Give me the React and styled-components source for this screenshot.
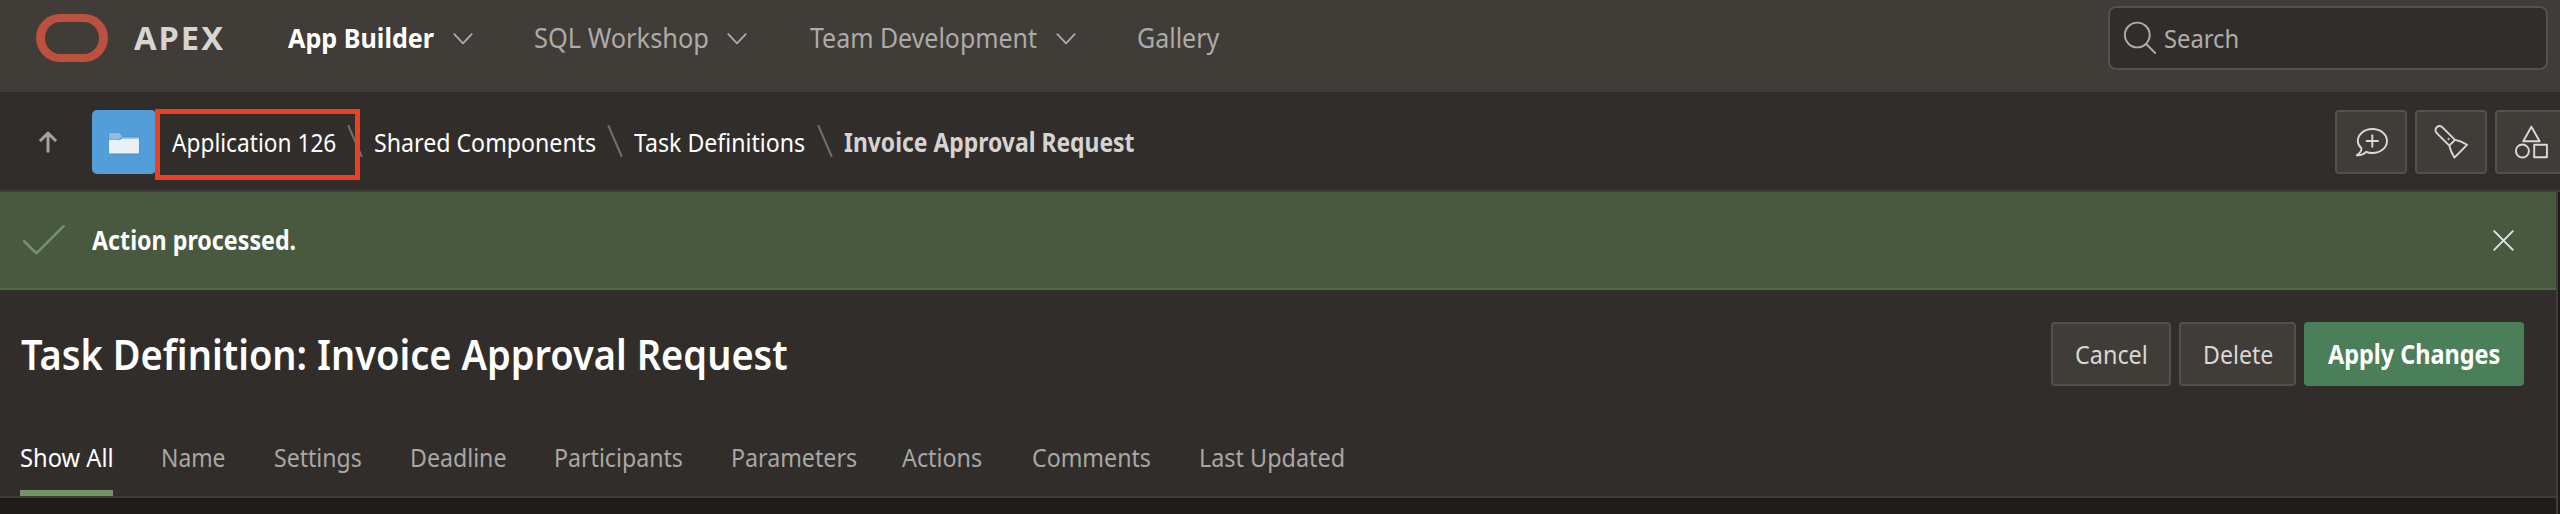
import React from 'react';
import styled, { createGlobalStyle } from 'styled-components';

const GlobalStyle = createGlobalStyle`
  * { box-sizing: border-box; }
  body { margin: 0; background: #312d2a; overflow: hidden; }
`;

const Page = styled.div`
  position: relative;
  width: 2560px;
  height: 514px;
  display: flex;
  flex-direction: column;
  overflow: hidden;
  background: #312d2a;
  font-family: "Noto Sans", "Open Sans", sans-serif;
  font-size: 26px;
  color: #fff;
`;

/* A single line of slightly condensed text that occupies $w pixels. */
const Label = styled.span`
  display: block;
  flex: none;
  width: ${(p) => p.$w}px;
  white-space: nowrap;
  line-height: 36px;
  transform: scaleX(${(p) => p.$k || 0.89});
  transform-origin: 0 50%;
`;

const Header = styled.header`
  height: 92px;
  flex: none;
  display: flex;
  padding: 6px 12px 22px 36px;
  align-items: center;
  background: #403c38;
`;

const Logo = styled.div`
  width: 72px;
  height: 48px;
  border: 8px solid #bb513e;
  border-width: 8px 9px;
  border-radius: 24px;
`;

const Brand = styled.div`
  width: 180px;
  padding-left: 26px;
  font-size: 33px;
  font-weight: 700;
  letter-spacing: 2px;
  color: #d6d5d4;
`;

const Nav = styled.nav`
  display: flex;
  flex: 1;
  font-size: 27px;
`;

const NavItem = styled.div`
  display: flex;
  align-items: center;
  margin-right: ${(p) => p.$gap}px;
  color: ${(p) => (p.$active ? '#fff' : '#adaba9')};
  font-weight: ${(p) => (p.$active ? 700 : 400)};
  svg { margin-left: 19px; margin-top: 2px; }
`;

const SearchBox = styled.div`
  display: flex;
  align-items: center;
  width: 440px;
  height: 64px;
  padding-left: 13px;
  border: 2px solid #55514d;
  border-radius: 8px;
  background: #312d2a;
  color: #b0aeab;
  svg { margin-right: 7px; }
`;

const CrumbBar = styled.div`
  height: 100px;
  flex: none;
  display: flex;
  align-items: center;
  padding: 2px 0 0 39px;
  border-bottom: 2px solid #403c39;
`;

const AppTile = styled.div`
  width: 64px;
  height: 64px;
  margin: 0 16px 0 35px;
  padding: 19px 0 0 16px;
  border-radius: 5px;
  background: #539dd8;
`;

const Crumbs = styled.div`
  display: flex;
  align-items: center;
  flex: 1;
`;

const Crumb = styled(Label)`
  color: ${(p) => (p.$current ? '#d6d4d2' : '#fff')};
  font-weight: ${(p) => (p.$current ? 700 : 400)};
`;

const IconButtons = styled.div`
  display: flex;
  gap: 8px;
  width: 225px;
  overflow: hidden;
`;

const IconButton = styled.button`
  flex: none;
  width: 72px;
  height: 64px;
  padding: 0;
  border: 2px solid #54504c;
  border-radius: 4px;
  background: #403c38;
  svg { display: block; }
`;

const Body = styled.main`
  flex: 1;
  display: flex;
  background: #1f1d1b;
`;

const Content = styled.section`
  width: 2558px;
  border-right: 2px solid #403d39;
`;

const Alert = styled.div`
  display: flex;
  align-items: center;
  height: 98px;
  padding: 0 42px 0 22px;
  border-bottom: 2px solid #55684c;
  background: #485940;
  font-weight: 700;
`;

const AlertText = styled.div`
  flex: 1;
  padding-left: 26px;
`;

const TitleRow = styled.div`
  display: flex;
  align-items: center;
  justify-content: space-between;
  height: 128px;
  padding: 0 32px 0 21px;
  background: #312d2a;
`;

const Title = styled.h1`
  margin: 0;
  font-size: 41px;
  font-weight: 600;
`;

const Actions = styled.div`
  display: flex;
  gap: 8px;
`;

const Button = styled.button`
  display: flex;
  align-items: center;
  width: ${(p) => p.$width}px;
  height: 64px;
  padding: 0 0 1px 22px;
  border: 2px solid ${(p) => (p.$hot ? '#4a7f59' : '#54504c')};
  border-radius: 4px;
  background: ${(p) => (p.$hot ? '#4a7f59' : '#403c38')};
  color: ${(p) => (p.$hot ? '#fff' : '#d9d7d4')};
  font: inherit;
  font-weight: ${(p) => (p.$hot ? 700 : 400)};
`;

const Tabs = styled.div`
  display: flex;
  gap: 48px;
  height: 80px;
  padding-left: 20px;
  border-bottom: 2px solid #3f3d39;
  background: #312d2a;
`;

const Tab = styled.div`
  display: flex;
  align-items: center;
  padding-top: 5px;
  border-bottom: 6px solid ${(p) => (p.$active ? '#759368' : 'transparent')};
  color: ${(p) => (p.$active ? '#fff' : '#a9a7a4')};
`;

const Highlight = styled.div`
  position: absolute;
  left: 155px;
  top: 109px;
  width: 205px;
  height: 71px;
  border: 5px solid #ea4025;
`;

const Chevron = () => (
  <svg width="20" height="12" viewBox="0 0 20 12" fill="none" stroke="#adaba9" strokeWidth="1.8" strokeLinecap="round" strokeLinejoin="round">
    <path d="M1.3 1.2 10 10.4 18.7 1.2" />
  </svg>
);

const SlashSvg = styled.svg`
  flex: none;
  margin: 0 11px 2px 12px;
`;
const Slash = () => (
  <SlashSvg width="16" height="32" viewBox="0 0 16 32" stroke="#716e6b" strokeWidth="2" strokeLinecap="round">
    <path d="M1.5 1 14.5 31" />
  </SlashSvg>
);

const NAV = [
  { text: 'App Builder', w: 146, k: 0.932, gap: 61, menu: true, active: true },
  { text: 'SQL Workshop', w: 174, k: 0.94, gap: 63, menu: true },
  { text: 'Team Development', w: 227, k: 0.923, gap: 61, menu: true },
  { text: 'Gallery', w: 82, k: 0.925, gap: 0 },
];

const CRUMBS = [
  { text: 'Application 126', w: 163, k: 0.8725 },
  { text: 'Shared Components', w: 221, k: 0.891 },
  { text: 'Task Definitions', w: 170.5, k: 0.889 },
  { text: 'Invoice Approval Request', w: 291, k: 0.8805, current: true },
];

const TABS = [
  { text: 'Show All', w: 93, k: 0.912 },
  { text: 'Name', w: 65, k: 0.88 },
  { text: 'Settings', w: 88, k: 0.888 },
  { text: 'Deadline', w: 95.5, k: 0.89 },
  { text: 'Participants', w: 129, k: 0.89 },
  { text: 'Parameters', w: 123.5, k: 0.892 },
  { text: 'Actions', w: 82, k: 0.896 },
  { text: 'Comments', w: 118.5, k: 0.892 },
  { text: 'Last Updated', w: 146, k: 0.899 },
];

const glyph = {
  width: 68,
  height: 60,
  viewBox: '2 2 68 60',
  fill: 'none',
  stroke: '#dcdad6',
  strokeWidth: 1.9,
  strokeLinejoin: 'round',
  strokeLinecap: 'round',
};

export default function App() {
  return (
    <Page>
      <GlobalStyle />
      <Header>
        <Logo />
        <Brand><Label $w={90} $k={0.99}>APEX</Label></Brand>
        <Nav>
          {NAV.map((n) => (
            <NavItem key={n.text} $active={n.active} $gap={n.gap}>
              <Label $w={n.w} $k={n.k}>{n.text}</Label>
              {n.menu && <Chevron />}
            </NavItem>
          ))}
        </Nav>
        <SearchBox>
          <svg width="34" height="34" viewBox="0 0 34 34" fill="none" stroke="#b0aeab" strokeWidth="1.9" strokeLinecap="round">
            <circle cx="14.3" cy="14" r="12.4" />
            <path d="m23.2 23 9 9" />
          </svg>
          <Label $w={73} $k={0.913}>Search</Label>
        </SearchBox>
      </Header>

      <CrumbBar>
        <svg width="18" height="22" viewBox="0 0 18 22" fill="none" stroke="#a5a3a0" strokeWidth="3" strokeLinecap="round" strokeLinejoin="round">
          <path d="M9 20.2V2M1.8 9.2 9 2l7.2 7.2" />
        </svg>
        <AppTile>
          <svg width="32" height="26" viewBox="0 0 32 26">
            <path d="M.8 1.3h11l3 4h16.5v18.2H.8z" fill="#4289bd" />
            <path d="M1.2 1.8h10.3l3.2 3.7-4 3.2H1.2z" fill="#8ebde4" />
            <path d="M14.7 5.7h16.1v1.7H13z" fill="#7db2db" />
            <path d="M1 9.1h10.5L14.3 7.4H31v15.2H1z" fill="#eaf1f6" />
          </svg>
        </AppTile>
        <Crumbs>
          {CRUMBS.map((c, i) => (
            <React.Fragment key={c.text}>
              {i > 0 && <Slash />}
              <Crumb $w={c.w} $k={c.k} $current={c.current}>{c.text}</Crumb>
            </React.Fragment>
          ))}
        </Crumbs>
        <IconButtons>
          <IconButton aria-label="Feedback">
            <svg {...glyph}>
              <path d="M26.400 38.300C23.800 36 22.800 33.600 22.800 31c0-6.800 6.500-12 14.600-12s14.600 5.200 14.600 12-6.500 12-14.600 12c-2.400 0-4.500-.4-6.300-1.200-2.300 2.500-5.500 3.600-9.300 3.400 3.200-2 4.900-4.300 4.600-6.900zM37.300 25.300v11.400M31.600 31H43" />
            </svg>
          </IconButton>
          <IconButton aria-label="Search application">
            <svg {...glyph}>
              <path d="M40 29.900 28 17.800c-4.300-4.200-10.200 1-6.200 5.300l12.500 12.600zM40 29.900c3.500.6 8 2.300 12 4.900L39.400 47.600c-2.400-3.800-4.100-7.700-5.100-11.900" />
              <circle cx="33.4" cy="29" r=".6" fill="#dcdad6" strokeWidth="1" />
            </svg>
          </IconButton>
          <IconButton aria-label="Shared components">
            <svg {...glyph}>
              <path d="m36.400 16.800 8.200 14.400H28.200z" />
              <circle cx="27.400" cy="41" r="6.500" />
              <path d="M39.200 34.800h12.700v12.500H39.200z" />
            </svg>
          </IconButton>
        </IconButtons>
      </CrumbBar>

      <Body>
        <Content>
          <Alert>
            <svg width="44" height="32" viewBox="0 0 44 32" fill="none" stroke="#72926a" strokeWidth="2.6" strokeLinecap="round" strokeLinejoin="round">
              <path d="M2 17.300 14.400 29.300 41.600 2.200" />
            </svg>
            <AlertText><Label $w={203} $k={0.8935}>Action processed.</Label></AlertText>
            <svg width="21" height="21" viewBox="0 0 21 21" stroke="#e3e6e0" strokeWidth="1.9" strokeLinecap="round">
              <path d="M1.200 1.200 19.800 19.800M19.800 1.200 1.200 19.800" />
            </svg>
          </Alert>
          <TitleRow>
            <Title><Label $w={768} $k={0.927}>Task Definition: Invoice Approval Request</Label></Title>
            <Actions>
              <Button $width={120}><Label $w={71} $k={0.9}>Cancel</Label></Button>
              <Button $width={117}><Label $w={69} $k={0.89}>Delete</Label></Button>
              <Button $width={220} $hot><Label $w={172} $k={0.901}>Apply Changes</Label></Button>
            </Actions>
          </TitleRow>
          <Tabs>
            {TABS.map((t, i) => (
              <Tab key={t.text} $active={i === 0}><Label $w={t.w} $k={t.k}>{t.text}</Label></Tab>
            ))}
          </Tabs>
        </Content>
      </Body>
      <Highlight />
    </Page>
  );
}
